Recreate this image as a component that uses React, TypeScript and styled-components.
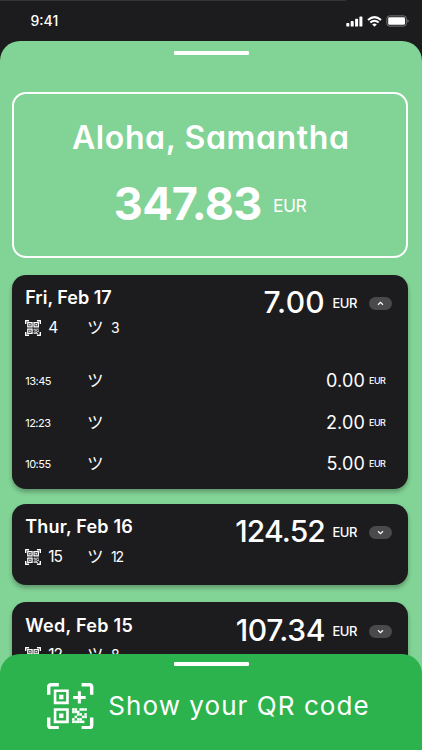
import React from "react";
import styled, { createGlobalStyle } from "styled-components";

const GlobalStyle = createGlobalStyle`
  *, *::before, *::after { box-sizing: border-box; }
  body {
    margin: 0;
    background: #1c1c1e;
    color: #fff;
    font-family: Inter, "Noto Sans CJK JP", sans-serif;
    font-feature-settings: "cv11";
  }
`;

const Phone = styled.div`
  position: relative;
  display: flex;
  flex-direction: column;
  width: 422px;
  height: 750px;
  overflow: hidden;
  background: #1c1c1e;
`;

const StatusBar = styled.header`
  display: flex;
  flex: none;
  justify-content: space-between;
  align-items: center;
  height: 40.7px;
  padding: 2px 13px 0 30.5px;
  background: linear-gradient(#343436, #343436) 0 0 / 346px 1px no-repeat;
`;

const Clock = styled.span`
  font-size: 14px;
  font-weight: 500;
  line-height: 20px;
  letter-spacing: 0;
`;

const StatusIcons = styled.div`
  display: flex;
  align-items: center;
  gap: 4px;
`;

const Wallet = styled.main`
  flex: 1;
  min-height: 0;
  padding: 10px 14px 0 12px;
  border-radius: 20px 20px 0 0;
  background: #82d396;
`;

const Handle = styled.div`
  width: 75px;
  height: 4px;
  margin: 0 auto;
  background: #fff;
  border-radius: 1px;
`;

const WalletHandle = styled(Handle)`
  margin-left: 161.6px;
`;

const Balance = styled.section`
  display: flex;
  flex-direction: column;
  align-items: center;
  height: 166px;
  margin-top: 37.6px;
  padding-top: 24px;
  border: 2px solid #fff;
  border-radius: 14px;
`;

const Greeting = styled.h1`
  margin: 0;
  padding-left: 1.5px;
  font-size: 32px;
  font-weight: 600;
  line-height: 40px;
  letter-spacing: 0.62px;
`;

const Total = styled.div`
  display: flex;
  align-items: center;
  gap: 11.5px;
  margin-top: 21px;
`;

const TotalValue = styled.strong`
  font-size: 45px;
  font-weight: 700;
  line-height: 50px;
  letter-spacing: -0.75px;
`;

const TotalCurrency = styled.span`
  padding-top: 3px;
  font-size: 17.5px;
  line-height: 22px;
  letter-spacing: -0.55px;
`;

const Days = styled.div`
  display: flex;
  flex-direction: column;
`;

const DayCard = styled.article<{ $open?: boolean }>`
  height: ${(p) => (p.$open ? "214px" : "81.5px")};
  margin-top: ${(p) => (p.$open ? "16.6px" : "15px")};
  padding: 11.6px 16.5px 0 13.2px;
  border-radius: 14px;
  background: #1c1c1e;
  box-shadow: 0 3px 4px rgba(0, 0, 0, 0.28);

  & + & + & { margin-top: 16.7px; }
`;

const DayHead = styled.div`
  display: flex;
  justify-content: space-between;
  align-items: flex-start;
  height: 32.4px;
`;

const DayName = styled.h2<{ $spacing: number }>`
  margin: 0;
  font-size: 18px;
  font-weight: 600;
  line-height: 24px;
  letter-spacing: ${(p) => p.$spacing}px;
`;

const DayTotal = styled.div`
  display: flex;
  align-items: center;
  padding-top: 1px;
`;

const DayValue = styled.span<{ $spacing: number }>`
  font-size: 30px;
  font-weight: 500;
  line-height: 31px;
  letter-spacing: ${(p) => p.$spacing}px;
`;

const DayCurrency = styled.span`
  width: 36.5px;
  margin-left: 7.5px;
  padding-top: 1px;
  font-size: 13px;
  font-weight: 500;
  line-height: 16px;
  letter-spacing: -0.5px;
`;

const Toggle = styled.button`
  display: grid;
  place-items: center;
  width: 22.5px;
  height: 13px;
  margin-top: 2px;
  padding: 0;
  border: 0;
  border-radius: 7px;
  background: #4a4a4c;
  color: #fff;
`;

const Counts = styled.div`
  display: grid;
  grid-template-columns: 23px 38.8px 24px auto;
  align-items: center;
  height: 18px;
`;

const Scans = styled.span<{ $tight?: boolean }>`
  font-size: 15.5px;
  line-height: 16px;
  letter-spacing: ${(p) => (p.$tight ? "-1.1px" : "0")};
`;

const Visits = styled(Scans)`
  font-size: 14px;
`;

const Smile = styled.span`
  padding-bottom: 2px;
  font-family: "Noto Sans CJK JP", sans-serif;
  font-size: 16.5px;
  line-height: 16px;
`;

const Entries = styled.ul`
  display: flex;
  flex-direction: column;
  gap: 17.5px;
  margin: 32.3px 0 0;
  padding: 0 6px 0 0;
  list-style: none;
`;

const Entry = styled.li`
  display: grid;
  grid-template-columns: 61.8px 1fr auto 16.5px;
  align-items: center;
  height: 24px;
`;

const EntryTime = styled.time`
  font-size: 11px;
  line-height: 16px;
  letter-spacing: -0.5px;
`;

const EntryValue = styled.span`
  padding-right: 4px;
  font-size: 18px;
  line-height: 24px;
  letter-spacing: 0.17px;
`;

const EntryCurrency = styled.span`
  font-size: 9px;
  font-weight: 500;
  line-height: 12px;
  letter-spacing: -0.5px;
`;

const CodeSheet = styled.footer`
  position: absolute;
  inset: auto 0 0;
  height: 96.3px;
  padding-top: 8.3px;
  border-radius: 20px 20px 0 0;
  background: #2db34d;
`;

const CodeAction = styled.div`
  display: flex;
  align-items: center;
  gap: 14.6px;
  margin-top: 17px;
  padding-left: 47.3px;
`;

const CodeLabel = styled.span`
  font-size: 26px;
  line-height: 32px;
  letter-spacing: 1.06px;
  white-space: nowrap;
`;

const MODULES = ["110111", "111000", "001101", "010011", "101100", "111110"];

function QrIcon({ size, plus }: { size: number; plus?: boolean }) {
  const frame = plus ? 3.4 : 4.6;
  const finder = plus ? 2.6 : 3.6;
  return (
    <svg width={size} height={size} viewBox="0 0 46 46" fill="none" stroke="#fff">
      <path
        d="M1.7 11.7V4Q1.7 1.7 4 1.7H11.7M34.3 1.7H42Q44.3 1.7 44.3 4V11.7M44.3 34.3V42Q44.3 44.3 42 44.3H34.3M11.7 44.3H4Q1.7 44.3 1.7 42V34.3"
        strokeWidth={frame}
      />
      <path d="M8 7.7H20.3V19.7H8ZM8 26.3H20.3V38.6H8Z" strokeWidth={finder} />
      <path d="M12 11.7h4.3v4.3H12zM12 30.3h4.3v4.3H12z" fill="#fff" stroke="none" />
      {plus ? (
        <path d="M26 14.3H38.3M32.1 8.2V20.4" strokeWidth="3" />
      ) : (
        <>
          <path d="M26 7.7H38.3V19.7H26Z" strokeWidth={finder} />
          <path d="M30 11.7h4.3v4.3H30z" fill="#fff" stroke="none" />
        </>
      )}
      {MODULES.map((row, y) =>
        [...row].map((on, x) =>
          on === "1" ? (
            <rect
              key={`${x}-${y}`}
              x={24.9 + x * 2.42}
              y={25 + y * 2.45}
              width="2.5"
              height="2.5"
              fill="#fff"
              stroke="none"
            />
          ) : null
        )
      )}
    </svg>
  );
}

function Chevron({ up }: { up?: boolean }) {
  return (
    <svg width="7" height="5" viewBox="0 0 7 5" fill="none" stroke="currentColor" strokeWidth="1.2">
      <path d={up ? "M1 3.8L3.5 1.4L6 3.8" : "M1 1.2L3.5 3.6L6 1.2"} />
    </svg>
  );
}

function Signal() {
  return (
    <svg width="17" height="11" viewBox="0 0 17 11" fill="#fff">
      <rect x="0.3" y="7" width="3" height="3.6" rx="0.7" />
      <rect x="4.7" y="5" width="3" height="5.6" rx="0.7" />
      <rect x="9.1" y="2.7" width="3" height="7.9" rx="0.7" />
      <rect x="13.4" y="0.4" width="3" height="10.2" rx="0.7" />
    </svg>
  );
}

function Wifi() {
  return (
    <svg width="15" height="11" viewBox="0 0 15 11" fill="none" stroke="#fff" strokeWidth="2">
      <path d="M1 4Q7.5 -1.8 14 4M3.3 6.6Q7.5 3 11.7 6.6" />
      <path d="M7.5 10.8L5.2 8.5Q7.5 6.7 9.8 8.5Z" fill="#fff" stroke="none" />
    </svg>
  );
}

function Battery() {
  return (
    <svg width="23" height="12" viewBox="0 0 23 12" fill="none">
      <rect x="0.9" y="0.9" width="19.4" height="10.2" rx="2.6" stroke="#777779" />
      <rect x="2.2" y="2.2" width="16.8" height="7.6" rx="1.4" fill="#fff" />
      <path d="M21.4 4.2V7.8Q22.7 7.2 22.7 6T21.4 4.2Z" fill="#777779" />
    </svg>
  );
}

type Day = {
  name: string;
  nameSpacing: number;
  total: string;
  totalSpacing: number;
  scans: string;
  visits: string;
  entries?: [string, string][];
};

const DAYS: Day[] = [
  {
    name: "Fri, Feb 17",
    nameSpacing: 0,
    total: "7.00",
    totalSpacing: 0.3,
    scans: "4",
    visits: "3",
    entries: [
      ["13:45", "0.00"],
      ["12:23", "2.00"],
      ["10:55", "5.00"],
    ],
  },
  { name: "Thur, Feb 16", nameSpacing: 0.2, total: "124.52", totalSpacing: -0.85, scans: "15", visits: "12" },
  { name: "Wed, Feb 15", nameSpacing: 0.3, total: "107.34", totalSpacing: -0.35, scans: "12", visits: "8" },
];

export default function App() {
  return (
    <>
      <GlobalStyle />
      <Phone>
        <StatusBar>
          <Clock>9:41</Clock>
          <StatusIcons>
            <Signal />
            <Wifi />
            <Battery />
          </StatusIcons>
        </StatusBar>
        <Wallet>
          <WalletHandle />
          <Balance>
            <Greeting>Aloha, Samantha</Greeting>
            <Total>
              <TotalValue>347.83</TotalValue>
              <TotalCurrency>EUR</TotalCurrency>
            </Total>
          </Balance>
          <Days>
            {DAYS.map((day) => (
              <DayCard key={day.name} $open={!!day.entries}>
                <DayHead>
                  <DayName $spacing={day.nameSpacing}>{day.name}</DayName>
                  <DayTotal>
                    <DayValue $spacing={day.totalSpacing}>{day.total}</DayValue>
                    <DayCurrency>EUR</DayCurrency>
                    <Toggle aria-label="Toggle details">
                      <Chevron up={!!day.entries} />
                    </Toggle>
                  </DayTotal>
                </DayHead>
                <Counts>
                  <QrIcon size={16} />
                  <Scans $tight={day.scans.length > 1}>{day.scans}</Scans>
                  <Smile>ツ</Smile>
                  <Visits $tight={day.visits.length > 1}>{day.visits}</Visits>
                </Counts>
                {day.entries && (
                  <Entries>
                    {day.entries.map(([time, value]) => (
                      <Entry key={time}>
                        <EntryTime>{time}</EntryTime>
                        <Smile>ツ</Smile>
                        <EntryValue>{value}</EntryValue>
                        <EntryCurrency>EUR</EntryCurrency>
                      </Entry>
                    ))}
                  </Entries>
                )}
              </DayCard>
            ))}
          </Days>
        </Wallet>
        <CodeSheet>
          <Handle />
          <CodeAction>
            <QrIcon size={46.4} plus />
            <CodeLabel>Show your QR code</CodeLabel>
          </CodeAction>
        </CodeSheet>
      </Phone>
    </>
  );
}
